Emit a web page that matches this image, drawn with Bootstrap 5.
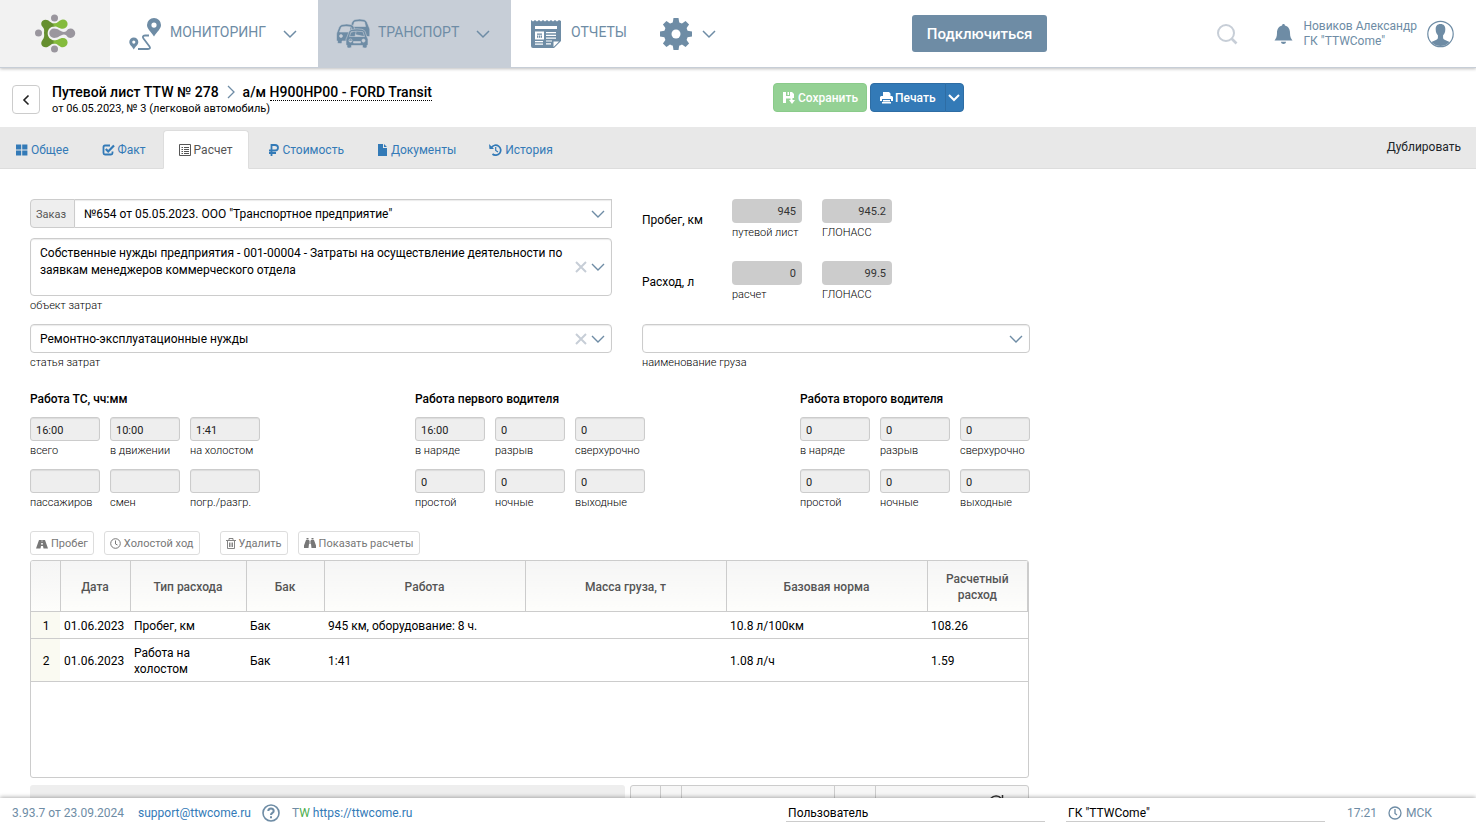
<!DOCTYPE html>
<html lang="ru">
<head>
<meta charset="utf-8">
<meta name="viewport" content="width=device-width, initial-scale=1">
<title>Путевой лист TTW № 278</title>
<link href="https://cdn.jsdelivr.net/npm/bootstrap@5.3.0/dist/css/bootstrap.min.css" rel="stylesheet">
<style>
  :root { --steel: #6e8ca5; --link: #337ab7; --line: #ccc; }
  body { font-family: Roboto, "Liberation Sans", sans-serif; font-size: 12px; line-height: 16px; color: #000; }
  a { color: var(--link); text-decoration: none; }
  svg { display: block; flex: none; }
  svg.glyph { display: inline-block; fill: currentColor; }
  .stroke { fill: none; stroke: currentColor; }

  /* top bar */
  .topbar { height: 68px; border-bottom: 1px solid #c7ced7; box-shadow: 0 1px 3px rgba(0,0,0,.25); z-index: 2; background: #fff; color: var(--steel); }
  .brand { width: 110px; background: #f2f2f2; }
  .topbar .menu-item { color: var(--steel); font-size: 14px; }
  .topbar .menu-item.active { background: #c7ced7; }
  .menu-item .caption { padding-bottom: 3px; }
  .btn-connect { background: var(--steel); color: #fff; font-size: 15px; font-weight: 500; height: 37px; border-radius: 3px; padding: 1px 14px 0; }

  /* sheet title */
  .sheet-head { height: 59px; padding: 4px 12px 0; }
  .btn-back { width: 28px; height: 29px; border: 1px solid var(--line); border-radius: 4px; background: #fff; padding: 0; }
  .sheet-title { font-size: 14px; font-weight: 500; line-height: 18px; }
  .sheet-title a { color: #000; border-bottom: 1px dotted #000; line-height: 18px; }
  .sheet-sub { font-size: 11px; line-height: 16px; }
  .head-actions { left: 773px; top: 15px; }
  .btn-act { height: 29px; font-size: 12px; font-weight: 500; padding: 0 9px; border-radius: 4px; line-height: 16px; }
  .btn-save, .btn-save:disabled { background: #94d194; border-color: #8acb8a; color: #fff; opacity: 1; padding: 0 8px 0 9px; }
  .btn-print { background: var(--link); border-color: #2e6da4; color: #fff; }

  /* tabs */
  .tabs-bar { background: #e8e8e8; height: 42px; border-bottom: 1px solid #ddd; padding-top: 3px; }
  .tabs-bar .nav-link { color: var(--link); font-size: 12px; line-height: 16px; padding: 0 15px; height: 39px; border: 1px solid transparent; border-radius: 4px 4px 0 0; gap: 3px; margin-right: 1px; }
  .tabs-bar .nav-link.active { background: #fff; color: #555; border-color: #ddd #ddd #fff; }

  /* form */
  .sheet-body { padding: 30px; }
  .form-area { max-width: 1000px; }
  .pair { display: grid; grid-template-columns: 3fr 2fr; column-gap: 30px; row-gap: 1px; }
  .hint { font-size: 11px; font-weight: 300; line-height: 14px; display: block; margin-top: 3px; white-space: nowrap; }
  .field { font-size: 12px; line-height: 17px; border: 1px solid var(--line); border-radius: 4px; padding: 1px 9px 0; height: 29px; color: #000; width: 100%; box-shadow: inset 0 1px 1px rgba(0,0,0,.08); }
  textarea.field { height: 58px; padding: 6px 40px 5px 9px; resize: none; overflow: hidden; display: block; }
  select.field { appearance: none; background: #fff url("data:image/svg+xml,%3Csvg xmlns='http://www.w3.org/2000/svg' width='14' height='10'%3E%3Cpath d='M1 2l6 6 6-6' fill='none' stroke='%236e8ca5' stroke-width='1.4'/%3E%3C/svg%3E") no-repeat right 6px center; }
  .order-tag { font-size: 11px; line-height: 16px; color: #555; background: #eee; border-color: var(--line); padding: 2px 8px 0 5px; width: 46px; border-radius: 4px 0 0 4px; }
  .in-field { position: absolute; right: 6px; top: 0; bottom: 0; display: flex; align-items: center; gap: 2px; }
  .in-field.beside-arrow { right: 24px; }
  .bare { border: 0; background: none; padding: 0; color: var(--steel); }
  .bare.clear { color: #c7ced7; }
  .total { display: grid; grid-template-columns: 90px 70px 70px; column-gap: 0; height: 62px; }
  .total > div + div { margin-left: 20px; }
  .metric { width: 70px; height: 24px; border: 0; border-radius: 4px; background: var(--line); text-align: right; font-size: 11px; padding: 0 6px; color: #333; display: block; }
  .work-title { font-size: 12px; font-weight: 500; line-height: 16px; margin: 0 0 10px; }
  .work-grid { display: grid; grid-template-columns: repeat(3, 70px); column-gap: 10px; row-gap: 11px; }
  .cell-in { width: 70px; height: 24px; border: 1px solid var(--line); border-radius: 3px; background: #eee; font-size: 11px; padding: 2px 5px 0; display: block; color: #222; box-shadow: inset 0 1px 1px rgba(0,0,0,.08); }

  .btn-tool { height: 24px; font-size: 11px; line-height: 16px; color: #777; border: 1px solid #ddd; border-radius: 3px; background: #fff; padding: 1px 5px 0; gap: 3px; }

  /* expense table */
  .grid-box { border: 1px solid var(--line); border-radius: 3px; height: 218px; max-width: 999px; overflow: hidden; }
  .grid-box table { table-layout: fixed; width: 100%; margin: 0; }
  .grid-box th { height: 50px; font-size: 12px; font-weight: 500; color: #555; text-align: center; vertical-align: middle; padding: 3px 10px 0; border-right: 1px solid var(--line); border-bottom: 1px solid var(--line); background: linear-gradient(#f5f5f5, #fdfdfb); }
  .grid-box td { padding: 6px 3px 4px 4px; vertical-align: middle; border-bottom: 1px solid var(--line); }
  .grid-box td.num { background: #fafaf2; text-align: center; }

  .next-box { background: #eee; height: 60px; border-radius: 3px 3px 0 0; }
  .next-grid { display: grid; grid-template-columns: 30px 21px 153px 41px 1fr; border: 1px solid var(--line); border-radius: 3px 3px 0 0; background: #f6f6f6; height: 60px; }
  .next-grid > div { border-right: 1px solid var(--line); }
  .below { display: grid; grid-template-columns: 595px 399px; column-gap: 5px; }

  /* status bar */
  .statusbar { height: 30px; background: #fff; color: var(--steel); box-shadow: 0 -1px 4px rgba(0,0,0,.3); z-index: 2; padding: 0 12px; }
  .status-in { font-size: 12px; height: 18px; border: 0; border-bottom: 1px solid var(--line); padding: 0 2px; color: #000; width: 259px; background: none; }
</style>
</head>
<body class="vh-100 d-flex flex-column overflow-hidden">

<header class="topbar d-flex flex-shrink-0 position-relative">
  <a href="#" class="brand d-flex align-items-center justify-content-center" aria-label="TTW">
    <svg width="42" height="40" viewBox="0 0 42 40">
      <g fill="#9a969e"><circle cx="20.500" cy="4" r="3.500"/><circle cx="4.500" cy="19" r="3.500"/><circle cx="20.500" cy="35" r="3.500"/>
      <path d="M20 14.500c5 0 6 3.300 10 3.500 3 0 3-3.500 6.500-3.500a4.700 4.700 0 0 1 0 9.500c-3.500 0-3.500-3.500-6.500-3.500-4 .2-5 3.500-10 3.500a4.700 4.700 0 0 1 0-9.500z"/></g>
      <path fill="#658f2f" d="M20.500 9.500c-4 0-5-3.800-9-3.800-4 0-5.500 4.300-3 7.100 2 2.200 1.800 3.700 1.500 6.200.3 2.500.5 4.500-1.500 6.900-2.500 3-1 7.300 3 7.300 4 0 5-3.800 9-3.800v-3c-9-1-9-14 0-14z"/>
      <path fill="#84bb3c" d="M19.500 9.500c5 0 5.500-4 9.500-4a4.600 4.600 0 0 1 0 9.200c-4 0-5-2.600-9.500-2.300zM19.500 29.400c5 0 5.500 3.800 9.500 3.800a4.600 4.600 0 0 0 0-9.200c-4 0-5 2.600-9.500 2.400z"/>
    </svg>
  </a>
  <nav class="d-flex" aria-label="Главное меню">
    <a href="#" class="menu-item d-flex align-items-center" style="width:208px;padding-left:18px">
      <svg width="36" height="34" viewBox="0 0 36 34">
        <path fill="currentColor" fill-rule="evenodd" d="M26 1a7 7 0 0 1 7 7c0 4-4 6.500-7 11.500-3-5-7-7.500-7-11.500a7 7 0 0 1 7-7zm0 4.500a2.600 2.600 0 1 0 0 5.200 2.600 2.600 0 0 0 0-5.200zM5.800 20.500a4.500 4.500 0 0 1 4.500 4.500c0 3-3 4.500-4.500 7.500-1.500-3-4.500-4.500-4.500-7.500a4.500 4.500 0 0 1 4.500-4.500zm0 3a1.600 1.600 0 1 0 0 3.200 1.600 1.600 0 0 0 0-3.200z"/>
        <path class="stroke" stroke-width="1.800" d="M21 18.500h-4c-2.500 0-2.500 1.500-1.500 3l6 8c1 1.500.5 2.500-1.500 2.500H10"/>
      </svg>
      <span class="caption me-3" style="margin-left:6px">МОНИТОРИНГ</span>
      <svg width="16" height="10" viewBox="0 0 16 10"><path class="stroke" stroke-width="1.500" d="M2 2l6 6 6-6"/></svg>
    </a>
    <a href="#" class="menu-item active d-flex align-items-center ps-3 pe-4" style="width:193px">
      <svg width="36" height="32" viewBox="0 0 36 32">
        <g fill="currentColor" stroke="#c7ced7" stroke-width=".6">
          <path fill-rule="evenodd" d="M16 9l2-5q1-2 3-2.500 5-1 9 0 2 .5 3 2.500l2 5 .8 2v6.500q0 1-1 1H30l-14-3zM19 8.500h12.500L30.500 4q-5-1.200-10 0z"/>
          <path fill-rule="evenodd" d="M2.700 15l2.300-6q1-2 3-2.500 5-1 9 0 2 .5 3 2.500l2 5-2 9H8v1.500q0 1-1.500 1H5q-1.500 0-1.500-1V23q-1 0-1-1v-5zM5.500 14h13L17 9q-5-1-9.500 0zM7 16.500a1.500 1.500 0 1 0 0 3 1.500 1.500 0 0 0 0-3z"/>
          <path fill-rule="evenodd" d="M13 19l2-5.500q1-1.800 3-2.200 5-1 10 0 2 .4 3 2.200l2 5.500 1 2v5.500l-1 1v1.300q0 1.200-1.500 1.200H30q-1.500 0-1.500-1.200V27.500h-11v1.300q0 1.200-1.500 1.200h-1.500q-1.500 0-1.500-1.200v-1.300l-1-1V21zM15.500 18.500h15L29 13.700q-6-1-12 0zM16.500 21a1.600 1.600 0 1 0 0 3.200 1.600 1.600 0 0 0 0-3.200zm13 0a1.600 1.600 0 1 0 0 3.200 1.600 1.600 0 0 0 0-3.200zM19.500 23.500v1.500h7v-1.500z"/>
        </g>
      </svg>
      <span class="caption ms-2 me-3">ТРАНСПОРТ</span>
      <svg width="16" height="10" viewBox="0 0 16 10"><path class="stroke" stroke-width="1.500" d="M2 2l6 6 6-6"/></svg>
    </a>
    <a href="#" class="menu-item d-flex align-items-center" style="width:148px;padding-left:20px">
      <svg width="30" height="30" viewBox="0 0 30 30">
        <path fill="currentColor" d="M0 1l2 1.500L4 1l2 1.500L8 1l2 1.500L12 1l2 1.500L16 1l2 1.500L20 1l2 1.500L24 1l2 1.500L28 1l2 1v20l-7 7H2q-2 0-2-2z"/>
        <path fill="#fff" d="M4 7h22v3H4zM4 12.500h9v8H4zM15 13h10v1.200H15zM15 15.800h10V17H15zM15 18.600h10v1.200H15zM15 21.400h6v1.200h-6zM15 24.200h5v1.200h-5zM4 22h8v1.200H4zM4 24.500h8v1.200H4zM22.500 28v-5.500h5.500z"/>
        <path fill="currentColor" d="M6 14.500h5v1.200H6zM6 16.500h1.300v2.300H6zM8 16.500h1.200v2.300H8zM9.800 16.500H11v2.300H9.800z"/>
      </svg>
      <span class="caption" style="margin-left:10px">ОТЧЕТЫ</span>
    </a>
    <a href="#" class="menu-item d-flex align-items-center" aria-label="Настройки">
      <svg width="34" height="34" viewBox="-17 -17 34 34">
        <g fill="currentColor"><circle r="12"/><path id="tooth" d="M-3.500-10l1-6h5l1 6v20l-1 6h-5l-1-6z"/><use href="#tooth" transform="rotate(45)"/><use href="#tooth" transform="rotate(90)"/><use href="#tooth" transform="rotate(135)"/></g><circle r="4.500" fill="#fff"/>
      </svg>
      <svg class="ms-2" width="16" height="10" viewBox="0 0 16 10"><path class="stroke" stroke-width="1.500" d="M2 2l6 6 6-6"/></svg>
    </a>
  </nav>
  <div class="ms-auto d-flex align-items-center">
    <button type="button" class="btn btn-connect" style="margin-right:169px">Подключиться</button>
    <button type="button" class="bare clear" aria-label="Поиск" style="margin-right:36px"><svg width="22" height="22" viewBox="0 0 22 22"><g class="stroke" stroke-width="2"><circle cx="10" cy="10" r="8"/><path stroke-width="2.600" d="M15.500 15.500l5 5"/></g></svg></button>
    <button type="button" class="bare" aria-label="Уведомления" style="margin-right:10px"><svg width="19" height="22" viewBox="0 0 19 22"><path fill="currentColor" d="M9.500 1c1 0 1.400.7 1.400 1.600C14.500 3.500 16 6.500 16 10c0 4 1 5.500 2.500 7.500H.5C2 15.500 3 14 3 10c0-3.500 1.500-6.500 5.100-7.400C8.100 1.700 8.500 1 9.500 1zM7 18.800h5c0 3-5 3-5 0z"/></svg></button>
    <div style="line-height:15px">Новиков Александр<br>ГК "TTWCome"</div>
    <a href="#" aria-label="Профиль" style="margin:0 22px 0 10px;color:var(--steel)"><svg width="27" height="28" viewBox="0 0 27 28"><clipPath id="face"><circle cx="13.500" cy="14" r="12"/></clipPath><circle class="stroke" cx="13.500" cy="14" r="12.700" stroke-width="1.200"/><path clip-path="url(#face)" fill="currentColor" d="M13.500 4c3.600 0 5 2.500 4.800 5.500 0 3-1 4.500-2.200 5.800 0 2-.3 3.700 1 4.200 3 1.500 5 1.500 6.900 4V28H3v-4.500c2-2.500 4-2.500 6.900-4 1.300-.5 1-2.200 1-4.200-1.200-1.300-2.200-2.800-2.200-5.800C8.500 6.500 9.900 4 13.500 4z"/></svg></a>
  </div>
</header>

<main class="flex-grow-1 overflow-hidden">
  <section class="sheet-head d-flex align-items-center position-relative">
    <button type="button" class="btn-back d-flex align-items-center justify-content-center" aria-label="Назад"><svg width="8" height="12" viewBox="0 0 8 12"><path d="M6.500 1.500L2 6l4.500 4.500" fill="none" stroke="#222" stroke-width="1.600"/></svg></button>
    <div style="margin-left:12px">
      <h1 class="sheet-title d-flex align-items-center m-0"><span>Путевой лист TTW № 278</span><svg class="mx-2" width="8" height="14" viewBox="0 0 8 14"><path d="M1 1l6 6-6 6" fill="none" stroke="#6e8ca5" stroke-width="1.300"/></svg><span>а/м <a href="#">Н900НР00 - FORD Transit</a></span></h1>
      <div class="sheet-sub">от 06.05.2023, № 3 (легковой автомобиль)</div>
    </div>
    <div class="head-actions position-absolute d-flex">
      <button type="button" class="btn btn-act btn-save d-flex align-items-center" style="margin-right:3px" disabled><svg style="margin-right:3px" width="12" height="12" viewBox="0 0 12 12"><path fill="#fff" d="M0 0h3v4h4V0h2l2 2v4H9.500v2H12l-3 4-3-4h1.500V6.500H3V11H0zM4.500 0H6v3H4.500z"/></svg>Сохранить</button>
      <div class="btn-group">
        <button type="button" class="btn btn-act btn-print d-flex align-items-center"><svg style="margin-right:2px" width="13" height="12" viewBox="0 0 13 12"><path fill="#fff" d="M3 4V0h6l1.500 1.500V4H12l1 1v4h-2V7H2v2H0V5l1-1zM3 8h7v1.500H3zM2 10h9v1.500H2z"/></svg>Печать</button>
        <button type="button" class="btn btn-act btn-print px-0 d-flex align-items-center justify-content-center" style="width:19px" aria-label="Варианты печати"><svg width="12" height="8" viewBox="0 0 12 8"><path d="M1 1l5 5 5-5" fill="none" stroke="#fff" stroke-width="2"/></svg></button>
      </div>
    </div>
  </section>

  <nav class="tabs-bar d-flex" aria-label="Разделы">
    <a href="#" class="nav-link d-flex align-items-center"><svg class="glyph" width="12" height="12" viewBox="0 0 12 12"><path d="M0 .5h5.200v5H0zM6.200.5h5.200v5H6.200zM0 6.500h5.200v5H0zM6.200 6.500h5.200v5H6.200z"/></svg><span>Общее</span></a>
    <a href="#" class="nav-link d-flex align-items-center"><svg width="13" height="12" viewBox="0 0 13 12"><path class="stroke" stroke-width="1.800" d="M8 1.500H3q-1.500 0-1.500 1.500v6q0 1.500 1.500 1.500h6q1.500 0 1.500-1.500V7.500"/><path class="stroke" stroke-width="2.200" d="M3.800 5l2.400 2.500L12 1.500"/></svg><span>Факт</span></a>
    <a href="#" class="nav-link active d-flex align-items-center" aria-current="page"><svg width="12" height="12" viewBox="0 0 12 12"><path class="stroke" d="M.5.5h11v11H.5zM5 3.500h5M5 5.500h5M5 7.500h5M5 9.500h5M2.500 3.500H4M2.500 5.500H4M2.500 7.500H4M2.500 9.500H4"/></svg><span>Расчет</span></a>
    <a href="#" class="nav-link d-flex align-items-center" style="padding-left:17px"><svg width="12" height="12" viewBox="0 0 12 12"><path class="stroke" stroke-width="1.800" d="M3.500 12V1H7c4 0 4 5.500 0 5.500H1M1 9h7"/></svg><span>Стоимость</span></a>
    <a href="#" class="nav-link d-flex align-items-center"><svg class="glyph" width="11" height="12" viewBox="0 0 11 12"><path d="M1 0h5v4h4v8H1zM7 0l3 3H7z"/></svg><span>Документы</span></a>
    <a href="#" class="nav-link d-flex align-items-center"><svg width="13" height="12" viewBox="0 0 13 12"><path class="stroke" stroke-width="1.700" d="M2.500 3.500a5 5 0 1 1 1 6.500"/><path fill="currentColor" d="M0 0l.5 5H5z"/><path class="stroke" stroke-width="1.200" d="M6.700 3v3.500L9 8"/></svg><span>История</span></a>
    <a href="#" class="ms-auto text-dark" style="margin-top:9px;margin-right:15px">Дублировать</a>
  </nav>

  <form class="sheet-body">
    <div class="form-area">
      <div class="pair">
        <div>
          <div class="d-flex" style="margin-bottom:10px">
            <label class="input-group-text order-tag" for="order">Заказ</label>
            <select id="order" class="field rounded-0 border-start-0"><option>№654 от 05.05.2023. ООО "Транспортное предприятие"</option></select>
          </div>
          <div class="position-relative">
            <textarea id="object" class="field">Собственные нужды предприятия - 001-00004 - Затраты на осуществление деятельности по заявкам менеджеров коммерческого отдела</textarea>
            <div class="in-field">
              <button type="button" class="bare clear" aria-label="Очистить"><svg width="14" height="14" viewBox="0 0 14 14"><path class="stroke" stroke-width="2" d="M2 2l10 10M12 2L2 12"/></svg></button>
              <button type="button" class="bare" aria-label="Выбрать"><svg width="16" height="10" viewBox="0 0 16 10"><path class="stroke" stroke-width="1.400" d="M2 2l6 6 6-6"/></svg></button>
            </div>
          </div>
          <label class="hint" for="object">объект затрат</label>
        </div>
        <div>
          <div class="total">
            <div style="padding-top:13px">Пробег, км</div>
            <div class="ms-0"><input id="t1" class="metric" value="945" readonly><label class="hint" for="t1">путевой лист</label></div>
            <div><input id="t2" class="metric" value="945.2" readonly><label class="hint" for="t2">ГЛОНАСС</label></div>
          </div>
          <div class="total">
            <div style="padding-top:13px">Расход, л</div>
            <div class="ms-0"><input id="t3" class="metric" value="0" readonly><label class="hint" for="t3">расчет</label></div>
            <div><input id="t4" class="metric" value="99.5" readonly><label class="hint" for="t4">ГЛОНАСС</label></div>
          </div>
        </div>
        <div>
          <div class="position-relative">
            <select id="article" class="field d-block"><option>Ремонтно-эксплуатационные нужды</option></select>
            <div class="in-field beside-arrow"><button type="button" class="bare clear" aria-label="Очистить"><svg width="14" height="14" viewBox="0 0 14 14"><path class="stroke" stroke-width="2" d="M2 2l10 10M12 2L2 12"/></svg></button></div>
          </div>
          <label class="hint" for="article">статья затрат</label>
        </div>
        <div>
          <select id="cargo" class="field d-block"><option></option></select>
          <label class="hint" for="cargo">наименование груза</label>
        </div>
      </div>

      <div class="d-flex justify-content-between" style="margin-top:21px">
        <section>
          <h2 class="work-title">Работа ТС, чч:мм</h2>
          <div class="work-grid">
            <div><input id="a1" class="cell-in" value="16:00" readonly><label class="hint" for="a1">всего</label></div>
            <div><input id="a2" class="cell-in" value="10:00" readonly><label class="hint" for="a2">в движении</label></div>
            <div><input id="a3" class="cell-in" value="1:41" readonly><label class="hint" for="a3">на холостом</label></div>
            <div><input id="a4" class="cell-in" readonly><label class="hint" for="a4">пассажиров</label></div>
            <div><input id="a5" class="cell-in" readonly><label class="hint" for="a5">смен</label></div>
            <div><input id="a6" class="cell-in" readonly><label class="hint" for="a6">погр./разгр.</label></div>
          </div>
        </section>
        <section>
          <h2 class="work-title">Работа первого водителя</h2>
          <div class="work-grid">
            <div><input id="b1" class="cell-in" value="16:00" readonly><label class="hint" for="b1">в наряде</label></div>
            <div><input id="b2" class="cell-in" value="0" readonly><label class="hint" for="b2">разрыв</label></div>
            <div><input id="b3" class="cell-in" value="0" readonly><label class="hint" for="b3">сверхурочно</label></div>
            <div><input id="b4" class="cell-in" value="0" readonly><label class="hint" for="b4">простой</label></div>
            <div><input id="b5" class="cell-in" value="0" readonly><label class="hint" for="b5">ночные</label></div>
            <div><input id="b6" class="cell-in" value="0" readonly><label class="hint" for="b6">выходные</label></div>
          </div>
        </section>
        <section>
          <h2 class="work-title">Работа второго водителя</h2>
          <div class="work-grid">
            <div><input id="c1" class="cell-in" value="0" readonly><label class="hint" for="c1">в наряде</label></div>
            <div><input id="c2" class="cell-in" value="0" readonly><label class="hint" for="c2">разрыв</label></div>
            <div><input id="c3" class="cell-in" value="0" readonly><label class="hint" for="c3">сверхурочно</label></div>
            <div><input id="c4" class="cell-in" value="0" readonly><label class="hint" for="c4">простой</label></div>
            <div><input id="c5" class="cell-in" value="0" readonly><label class="hint" for="c5">ночные</label></div>
            <div><input id="c6" class="cell-in" value="0" readonly><label class="hint" for="c6">выходные</label></div>
          </div>
        </section>
      </div>

      <div class="d-flex" style="margin:21px 0 5px;gap:10px">
        <button type="button" class="btn-tool d-flex align-items-center"><svg class="glyph" width="12" height="10" viewBox="0 0 12 10"><path fill-rule="evenodd" d="M3 1h6l3 8.500H7.500L7 7H5l-.5 2.500H0zM5.500 1.500v1h1v-1zM5.300 4L5 5.500h2L6.700 4z"/></svg>Пробег</button>
        <button type="button" class="btn-tool d-flex align-items-center" style="margin-right:10px"><svg width="11" height="11" viewBox="0 0 11 11"><circle class="stroke" cx="5.500" cy="5.500" r="4.800"/><path class="stroke" d="M5.500 2.500v3.500l2 1"/></svg>Холостой ход</button>
        <button type="button" class="btn-tool d-flex align-items-center"><svg width="10" height="11" viewBox="0 0 10 11"><path class="stroke" stroke-width=".9" d="M0 2.500h10M3 2V.5h4V2M1.500 3v7.500h7V3M3.500 4.500v4.500M5 4.500v4.500M6.500 4.500v4.500"/></svg>Удалить</button>
        <button type="button" class="btn-tool d-flex align-items-center"><svg class="glyph" width="12" height="11" viewBox="0 0 12 11"><path d="M2.500 0h2v1.500H2.500zM7.500 0h2v1.500h-2zM2 2h3v4L4.500 10H0V7.500zM10 2H7v4l.5 4H12V7.500zM5.400 2.500h1.200V6H5.400z"/></svg>Показать расчеты</button>
      </div>

      <div class="grid-box">
        <table>
          <colgroup><col style="width:29px"><col style="width:70px"><col style="width:116px"><col style="width:78px"><col style="width:201px"><col style="width:201px"><col style="width:201px"><col></colgroup>
          <thead><tr><th></th><th>Дата</th><th>Тип расхода</th><th>Бак</th><th>Работа</th><th>Масса груза, т</th><th>Базовая норма</th><th>Расчетный расход</th></tr></thead>
          <tbody>
            <tr><td class="num">1</td><td>01.06.2023</td><td>Пробег, км</td><td>Бак</td><td>945 км, оборудование: 8 ч.</td><td></td><td>10.8 л/100км</td><td>108.26</td></tr>
            <tr><td class="num">2</td><td>01.06.2023</td><td>Работа на<br>холостом</td><td>Бак</td><td>1:41</td><td></td><td>1.08 л/ч</td><td>1.59</td></tr>
          </tbody>
        </table>
      </div>

      <div class="below" style="margin-top:7px">
        <div class="next-box"></div>
        <div class="next-grid"><div></div><div></div><div></div><div></div><div class="d-flex border-end-0"><svg style="margin:8px 0 0 112px" width="16" height="16" viewBox="0 0 16 16"><path fill="none" stroke="#333" stroke-width="1.500" d="M13.500 5a6.500 6.500 0 1 0 1 4M14.500 1v4h-4"/></svg></div></div>
      </div>
    </div>
  </form>
</main>

<footer class="statusbar d-flex align-items-center flex-shrink-0">
  <span style="margin-right:14px">3.93.7 от 23.09.2024</span>
  <a href="#">support@ttwcome.ru</a>
  <a href="#" aria-label="Справка" style="color:var(--steel);margin:0 12px 0 11px"><svg width="18" height="18" viewBox="0 0 18 18"><circle class="stroke" cx="9" cy="9" r="8" stroke-width="1.600"/><path class="stroke" stroke-width="2" d="M6.300 7c0-3.400 5.400-3.400 5.400 0 0 2-2.700 1.800-2.700 4M9 12.300v2"/></svg></a>
  <a href="#"><span style="color:var(--steel)">T</span><span style="color:#4cae4c">W</span> https://ttwcome.ru</a>
  <div class="ms-auto d-flex align-items-center">
    <input class="status-in" aria-label="Роль" value="Пользователь" style="margin-right:21px">
    <input class="status-in" aria-label="Компания" value='ГК "TTWCome"' style="margin-right:22px">
    <span>17:21</span>
    <svg style="margin:0 4px 0 11px" width="14" height="14" viewBox="0 0 14 14"><circle class="stroke" cx="7" cy="7" r="6" stroke-width="1.300"/><path class="stroke" stroke-width="1.300" d="M7 3v4.500l2 1.500"/></svg>
    <span style="margin-right:32px">МСК</span>
  </div>
</footer>

<script src="https://cdn.jsdelivr.net/npm/bootstrap@5.3.0/dist/js/bootstrap.bundle.min.js"></script>
</body>
</html>
